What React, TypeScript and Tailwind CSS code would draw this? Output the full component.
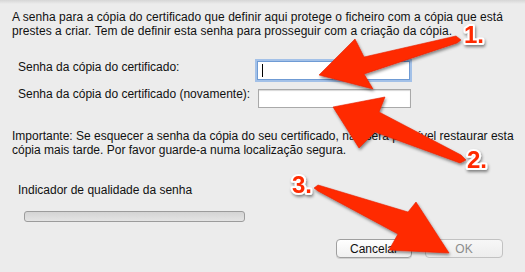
import React from "react";

// annotation arrows, hand-placed polygons (tip first)
const arrows = [
    "319,75 355,39 364,57 456,36 461,40 457,43 364,74 373,89",
    "333,107 385,97 379,112 461,155 466,160 460,163 375,132 359,148",
    "449,253 389,250 398,234 318,191 314,188 318,185 408,212 416,202",
];

const labels = [
    { t: "1.", x: 464, y: 43 },
    { t: "2.", x: 467, y: 168 },
    { t: "3.", x: 292, y: 193 },
];

function Annotations() {
    return (
        <svg className="absolute inset-0 pointer-events-none" width="525" height="272" viewBox="0 0 525 272">
            <defs>
                <filter id="sh" x="-20%" y="-20%" width="140%" height="140%">
                    <feDropShadow dx="1" dy="2" stdDeviation="1.6" floodColor="#000" floodOpacity="0.45" />
                </filter>
            </defs>
            {arrows.map((p, i) => (
                <polygon key={i} points={p} fill="#ff2a00" stroke="#e52200" strokeWidth="0.6" strokeLinejoin="round" filter="url(#sh)" />
            ))}
            {labels.map((l) => (
                <text
                    key={l.t}
                    x={l.x}
                    y={l.y}
                    fontFamily="'Liberation Sans', Arial, sans-serif"
                    fontWeight="bold"
                    fontSize="24"
                    fill="#ff2a00"
                    stroke="#fff"
                    strokeWidth="4"
                    strokeLinejoin="round"
                    paintOrder="stroke"
                    filter="url(#sh)"
                >
                    {l.t}
                </text>
            ))}
        </svg>
    );
}

export default function App() {
    return (
        <div
            className="relative w-[525px] h-[272px] overflow-hidden bg-[#ececec] text-[12px] leading-[14px] text-[#111]"
            style={{ fontFamily: "'Liberation Sans', Arial, sans-serif" }}
        >
            <div className="h-[4px] bg-gradient-to-b from-[#d6d6d6] to-[#ececec]" />
            <div className="pl-3 pt-[6px]">
                <p className="tracking-[0.05px]">
                    A senha para a cópia do certificado que definir aqui protege o ficheiro com a cópia que está
                    <br />
                    prestes a criar. Tem de definir esta senha para prosseguir com a criação da cópia.
                </p>

                <div className="mt-[23px] pl-[6px] flex flex-col gap-[9px]">
                    <div className="flex items-start">
                        <span className="w-[239px] -mt-[1px]">Senha da cópia do certificado:</span>
                        <div className="w-[153px] h-[19px] bg-white border border-[#6f9bd4] shadow-[0_0_0_2px_#a3c1e8] flex items-center pl-[4px]">
                            <div className="w-px h-[13px] bg-black" />
                        </div>
                    </div>
                    <div className="flex items-start">
                        <span className="w-[240px] -mt-[2px]">Senha da cópia do certificado (novamente):</span>
                        <div className="w-[153px] h-[19px] bg-white border border-[#a9a9a9] shadow-[inset_0_1px_1px_#d8d8d8]" />
                    </div>
                </div>

                <p className="mt-[21px]">
                    Importante: Se esquecer a senha da cópia do seu certificado, não será possível restaurar esta
                    <br />
                    cópia mais tarde. Por favor guarde-a numa localização segura.
                </p>

                <div className="pl-[6px] mt-[26px]">Indicador de qualidade da senha</div>
                <div className="ml-[12px] mt-[14px] w-[221px] h-[11px] rounded-[3px] border border-[#9c9c9c] bg-gradient-to-b from-[#d4d4d4] to-[#e4e4e4]" />

                <div className="flex justify-end gap-[13px] mt-[17px] pr-[22px]">
                    <button className="w-[76px] h-[19px] rounded-[4px] border border-[#9f9f9f] bg-gradient-to-b from-white to-[#f0f0f0] text-[#111] text-[12px] leading-none shadow-[0_1px_0_#d0d0d0]">
                        Cancelar
                    </button>
                    <button className="w-[78px] h-[19px] rounded-[4px] border border-[#c2c2c2] bg-gradient-to-b from-[#f7f7f7] to-[#ededed] text-[#8c8c8c] text-[12px] leading-none">
                        OK
                    </button>
                </div>
            </div>
            <Annotations />
        </div>
    );
}
